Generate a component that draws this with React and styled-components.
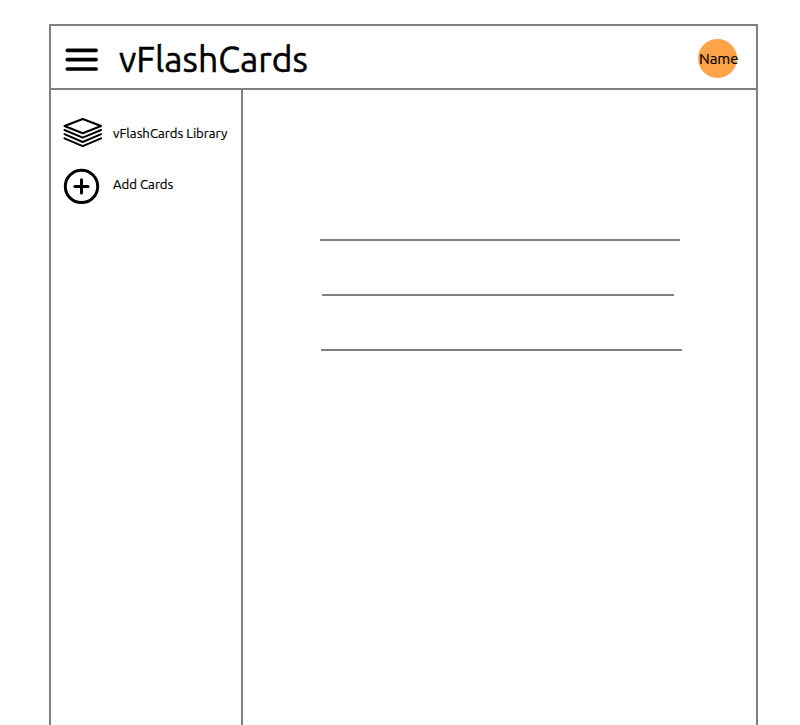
import React from "react";
import styled, { createGlobalStyle } from "styled-components";

const Global = createGlobalStyle`
  * { box-sizing: border-box; }
  body { margin: 0; background: #fff; overflow: hidden; }
`;
const Page = styled.div`
  height: 725px;
  padding: 24px 42px 0 49px;
  font-family: Ubuntu, "Noto Sans", sans-serif;
  color: #000;
`;
const Frame = styled.div`
  height: 701px;
  display: flex;
  flex-direction: column;
  border: 2px solid #808080;
  border-bottom: 0;
`;
const Header = styled.header`
  height: 64px;
  flex: none;
  display: flex;
  align-items: center;
  padding: 0 19px 0 14px;
  border-bottom: 2px solid #808080;
`;
const Icon = styled.svg`
  display: block;
  flex: none;
  margin-top: ${(p) => p.$top || 0}px;
  fill: none;
  stroke: #000;
  stroke-linecap: round;
  stroke-linejoin: round;
`;
const Title = styled.h1`
  margin: 3px 0 0 20px;
  font-size: 35.5px;
  line-height: 48px;
  font-weight: 400;
  -webkit-text-stroke: 0.5px #000;
  white-space: nowrap;
`;
const Avatar = styled.div`
  width: 39.5px;
  height: 39.5px;
  margin: 3px 0 0 auto;
  padding-left: 3px;
  display: flex;
  align-items: center;
  justify-content: center;
  border-radius: 50%;
  background: #ffa348;
  font-size: 15px;
  -webkit-text-stroke: 0.2px #000;
  white-space: nowrap;
`;
const Body = styled.div`
  flex: 1;
  display: flex;
`;
const Sidebar = styled.nav`
  width: 192px;
  padding: 25px 0 0 12px;
  border-right: 2px solid #808080;
`;
const Item = styled.a`
  height: ${(p) => p.$height}px;
  display: flex;
  align-items: flex-start;
`;
const Label = styled.span`
  margin: ${(p) => p.$top}px 0 0 10px;
  font-size: 13.2px;
  line-height: 18px;
  -webkit-text-stroke: 0.2px #000;
  white-space: nowrap;
`;
const Main = styled.main`
  flex: 1;
  display: flex;
  flex-direction: column;
  gap: 53px;
  padding: 149px 0 0 77px;
`;
const Line = styled.div`
  width: ${(p) => p.$width}px;
  height: 2px;
  margin-left: ${(p) => p.$indent}px;
  background: #808080;
`;

const lines = [
  { width: 360, indent: 0 },
  { width: 352, indent: 2 },
  { width: 361, indent: 1 },
];

export default function App() {
  return (
    <Page>
      <Global />
      <Frame>
        <Header>
          <Icon $top={4} width="34" height="28" viewBox="65 45 34 28" strokeWidth="3.7">
            <path d="M67.3 50.3H96.1M67.3 59.6H96.1M67.3 69H96.1" />
          </Icon>
          <Title>vFlashCards</Title>
          <Avatar>Name</Avatar>
        </Header>
        <Body>
          <Sidebar>
            <Item $height={50}>
              <Icon width="40" height="34" viewBox="63 115 40 34" strokeWidth="2">
                <path d="M82.7 119L101.1 126L82.7 133.2L64.5 126Z" />
                <path d="M64.5 130L82.7 137.7L101.1 130M64.5 134.2L82.7 142L101.1 134.2M64.5 138.4L82.7 146.2L101.1 138.4" />
              </Icon>
              <Label $top={9}>vFlashCards Library</Label>
            </Item>
            <Item $height={42}>
              <Icon width="40" height="42" viewBox="63 165 40 42" strokeWidth="3">
                <circle cx="81.5" cy="186.4" r="16.2" />
                <path d="M74.9 186.4H88.1M81.5 179.8V193" />
              </Icon>
              <Label $top={10}>Add Cards</Label>
            </Item>
          </Sidebar>
          <Main>
            {lines.map((line) => (
              <Line key={line.indent} $width={line.width} $indent={line.indent} />
            ))}
          </Main>
        </Body>
      </Frame>
    </Page>
  );
}
